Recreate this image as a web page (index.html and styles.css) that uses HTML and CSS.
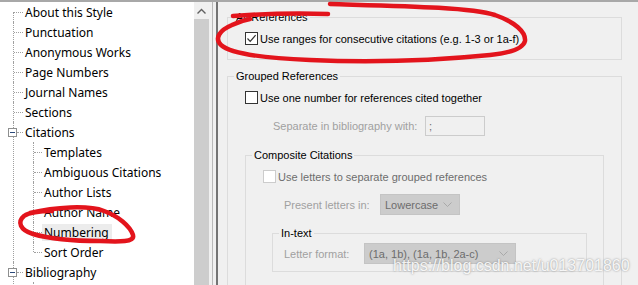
FILE: index.html
```html
<!DOCTYPE html>
<html lang="en">

<head>
    <meta charset="UTF-8">
    <meta name="viewport" content="width=device-width, initial-scale=1">
    <title>Style Editor - Numbering</title>
    <link rel="stylesheet" href="styles.css">
</head>

<body>
    <div class="window">
        <div class="tree">
            <ul class="level1">
                <li><div class="row"><span class="line"></span><span class="label">About this Style</span></div></li>
                <li><div class="row"><span class="line"></span><span class="label">Punctuation</span></div></li>
                <li><div class="row"><span class="line"></span><span class="label">Anonymous Works</span></div></li>
                <li><div class="row"><span class="line"></span><span class="label">Page Numbers</span></div></li>
                <li><div class="row"><span class="line"></span><span class="label">Journal Names</span></div></li>
                <li><div class="row"><span class="line"></span><span class="label">Sections</span></div></li>
                <li>
                    <div class="row">
                        <span class="toggle"><svg width="9" height="9"><rect x="0.5" y="0.5" width="8" height="8" fill="#fff" stroke="#8e8f8f"/><path d="M2 4.5h5" stroke="#2c4a7a"/></svg></span>
                        <span class="line short"></span><span class="label">Citations</span>
                    </div>
                    <ul class="level2">
                        <li><div class="row"><span class="line"></span><span class="label">Templates</span></div></li>
                        <li><div class="row"><span class="line"></span><span class="label">Ambiguous Citations</span></div></li>
                        <li><div class="row"><span class="line"></span><span class="label">Author Lists</span></div></li>
                        <li><div class="row"><span class="line"></span><span class="label">Author Name</span></div></li>
                        <li><div class="row"><span class="line"></span><span class="label selected">Numbering</span></div></li>
                        <li class="last"><div class="row"><span class="line"></span><span class="label">Sort Order</span></div></li>
                    </ul>
                </li>
                <li>
                    <div class="row">
                        <span class="toggle"><svg width="9" height="9"><rect x="0.5" y="0.5" width="8" height="8" fill="#fff" stroke="#8e8f8f"/><path d="M2 4.5h5" stroke="#2c4a7a"/></svg></span>
                        <span class="line short"></span><span class="label">Bibliography</span>
                    </div>
                    <ul class="level2">
                        <li><div class="row"><span class="line"></span><span class="label">Templates</span></div></li>
                    </ul>
                </li>
            </ul>
        </div>

        <div class="scrollbar">
            <div class="scroll-up">
                <svg width="15" height="17"><path d="M3.5 11.5 L7.5 7.5 L11.5 11.5" fill="none" stroke="#606060" stroke-width="1.4"/></svg>
            </div>
            <div class="scroll-thumb"></div>
        </div>

        <div class="splitter"></div>

        <div class="panel">
            <fieldset class="group group-all">
                <legend>All References</legend>
                <label class="check">
                    <span class="box"><svg width="11" height="11"><path d="M1.5 5.5 L4.2 8.3 L9.6 2.2" fill="none" stroke="#333" stroke-width="1.2"/></svg></span>
                    <span>Use ranges for consecutive citations (e.g. 1-3 or 1a-f)</span>
                </label>
            </fieldset>

            <fieldset class="group group-grouped">
                <legend>Grouped References</legend>
                <label class="check">
                    <span class="box"></span>
                    <span>Use one number for references cited together</span>
                </label>
                <div class="field separate">
                    <span class="field-label">Separate in bibliography with:</span>
                    <span class="textbox">;</span>
                </div>

                <fieldset class="group group-composite">
                    <legend>Composite Citations</legend>
                    <label class="check disabled">
                        <span class="box"></span>
                        <span>Use letters to separate grouped references</span>
                    </label>
                    <div class="field present">
                        <span class="field-label">Present letters in:</span>
                        <span class="combo">Lowercase<svg width="9" height="5"><path d="M0.5 0.5 L4.5 4.5 L8.5 0.5" fill="none" stroke="#a9a9a9"/></svg></span>
                    </div>

                    <fieldset class="group group-intext">
                        <legend>In-text</legend>
                        <div class="field letter">
                            <span class="field-label">Letter format:</span>
                            <span class="combo">(1a, 1b), (1a, 1b, 2a-c)<svg width="9" height="5"><path d="M0.5 0.5 L4.5 4.5 L8.5 0.5" fill="none" stroke="#a9a9a9"/></svg></span>
                        </div>
                    </fieldset>
                </fieldset>
            </fieldset>
        </div>
    </div>

    <svg class="ink" width="638" height="285">
        <path d="M233 16 C260 14 300 13 328 14" />
        <path d="M330 4 C400 6 470 7 495 15 C515 22 526 32 525 41 C523 49 510 53 490 55 C440 60 380 63 310 60 C260 58 230 53 221 45 C214 38 220 30 232 25 C238 22 244 20 250 19" />
        <path d="M30 213 C55 207 88 205 104 211 C118 216 130 226 133 235 C135 242 120 242 100 241 C75 241 50 239 33 234 C20 230 17 222 24 216 C30 212 40 211 52 211" />
    </svg>

    <div class="watermark">https://blog.csdn.net/u013701860</div>
</body>

</html>
```

FILE: styles.css
```css
body {
    margin: 0;
    width: 638px;
    height: 285px;
    overflow: hidden;
    position: relative;
    font-family: "Noto Sans", "DejaVu Sans", sans-serif;
    font-size: 12px;
    color: #000;
    background-color: #f0f0f0;
}

.window {
    display: flex;
    height: 283px;
    border-top: 2px solid #a8a8a8;
}

/* tree on the left */

.tree {
    width: 194px;
    background-color: #fff;
    overflow: hidden;
}

.tree ul {
    list-style: none;
    margin: 0;
    padding: 0;
}

.tree .level1 {
    margin-left: 14px;
}

.tree .level2 {
    margin-left: 20px;
}

.tree li {
    position: relative;
}

.tree li::before {
    content: "";
    position: absolute;
    left: -1px;
    top: 0;
    bottom: 0;
    border-left: 1px dotted #a0a0a0;
}

.tree .level1 > li:first-child::before {
    top: 10px;
}

.tree li.last::before {
    bottom: auto;
    height: 10px;
}

.row {
    display: flex;
    align-items: center;
    height: 20px;
}

.line {
    width: 9px;
    border-top: 1px dotted #a0a0a0;
}

.level2 .line {
    width: 8px;
}

.line.short {
    width: 6px;
}

.toggle {
    position: relative;
    z-index: 1;
    display: flex;
    margin-left: -6px;
}

.label {
    padding: 0 3px 0 2px;
    line-height: 17px;
    white-space: nowrap;
}

.label.selected {
    background-color: #ececec;
}

/* scrollbar and splitter */

.scrollbar {
    width: 15px;
    display: flex;
    flex-direction: column;
    background-color: #f0f0f0;
}

.scroll-up {
    height: 17px;
}

.scroll-up svg {
    display: block;
}

.scroll-thumb {
    flex: 1;
    background-color: #cdcdcd;
}

.splitter {
    width: 3px;
    border-right: 1px solid #b9b9b9;
    margin-right: 3px;
}

/* options panel */

.panel {
    flex: 1;
    border-left: 2px solid #747474;
    padding: 0 16px 0 9px;
    overflow: hidden;
    font-family: "Liberation Sans", Arial, sans-serif;
    font-size: 11px;
}

.group {
    border: 1px solid #dcdcdc;
    margin: 0;
    padding: 0;
    min-width: 0;
}

.group legend {
    margin-left: 6px;
    padding: 0 2px;
    line-height: 16px;
}

.group-all {
    margin-top: 7px;
    padding-bottom: 11px;
}

.group-grouped {
    margin-top: 8px;
    height: 300px;
}

.group-composite {
    margin: 11px 17px 0 17px;
    height: 200px;
}

.group-intext {
    margin: 10px 16px 0 26px;
    padding-bottom: 7px;
}

.check {
    display: flex;
    align-items: center;
    gap: 2px;
    height: 19px;
    margin-top: 4px;
    padding-left: 17px;
    white-space: nowrap;
}

.box {
    box-sizing: border-box;
    width: 13px;
    height: 13px;
    border: 1px solid #333;
    background-color: #fff;
    display: flex;
}

.check.disabled {
    color: #6d6d6d;
}

.check.disabled .box {
    border-color: #cccccc;
}

.field {
    display: flex;
    align-items: center;
    color: #a0a0a0;
    white-space: nowrap;
}

.field-label {
    flex-shrink: 0;
}

.separate {
    margin-top: 9px;
    padding-left: 45px;
}

.separate .field-label {
    width: 152px;
}

.textbox {
    box-sizing: border-box;
    width: 60px;
    height: 20px;
    padding: 0 3px;
    line-height: 18px;
    border: 1px solid #cccccc;
    color: #6d6d6d;
}

.present {
    margin-top: 8px;
    padding-left: 38px;
}

.present .field-label {
    width: 96px;
}

.letter {
    margin-top: 2px;
    padding-left: 11px;
}

.letter .field-label {
    width: 80px;
}

.combo {
    box-sizing: border-box;
    display: flex;
    align-items: center;
    justify-content: space-between;
    height: 21px;
    padding: 0 7px 0 4px;
    background-color: #cccccc;
    border: 1px solid #c4c4c4;
    color: #6d6d6d;
}

.present .combo {
    width: 80px;
}

.letter .combo {
    width: 152px;
}

/* marker drawn over the screenshot */

.ink {
    position: absolute;
    left: 0;
    top: 0;
    pointer-events: none;
}

.ink path {
    fill: none;
    stroke: #e3141c;
    stroke-width: 4.5;
    stroke-linecap: round;
    stroke-linejoin: round;
}

.watermark {
    position: absolute;
    left: 393px;
    top: 257px;
    font-family: "Liberation Sans", Arial, sans-serif;
    font-size: 16px;
    line-height: 18px;
    color: rgba(255, 255, 255, 0.9);
    text-shadow: 0 0 2px rgba(90, 90, 90, 0.7);
    white-space: nowrap;
}
```
